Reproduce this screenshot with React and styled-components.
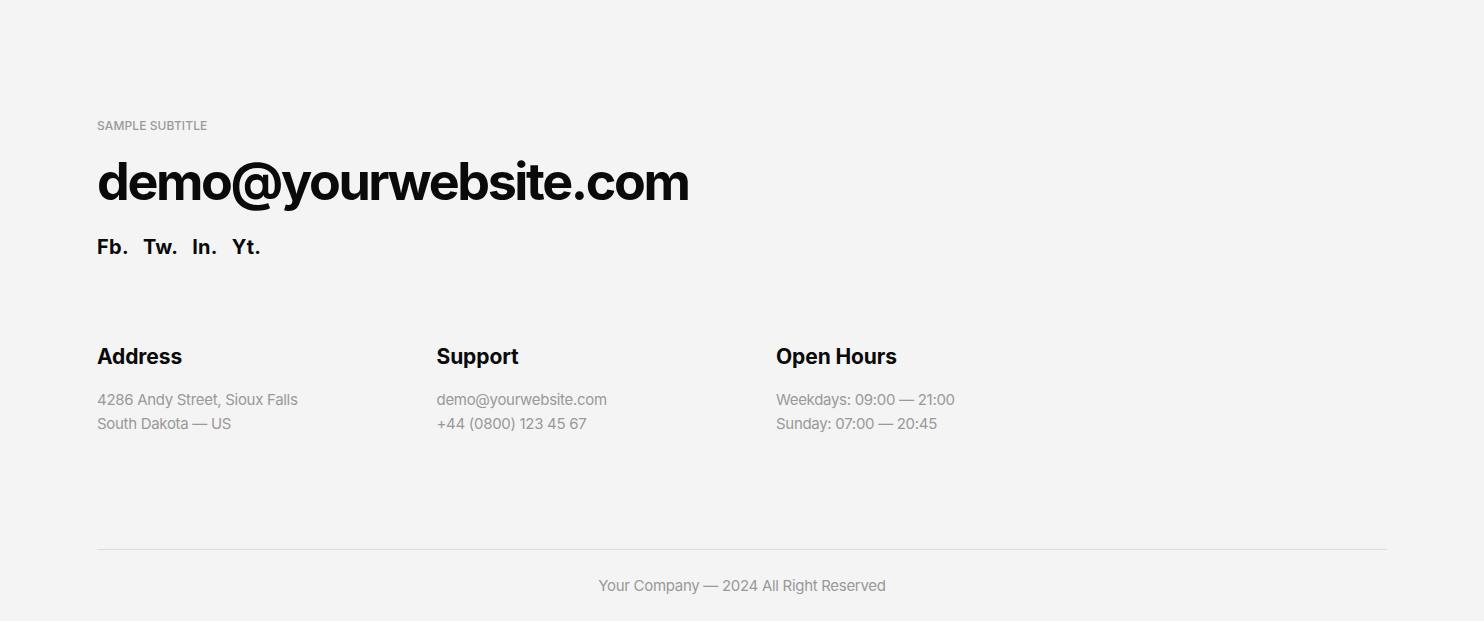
import React from 'react';
import styled, {createGlobalStyle} from 'styled-components';

const GlobalStyle = createGlobalStyle`
    html, body {
        margin: 0;
        padding: 0;
        background: #f4f4f4;
        font-family: Inter, "Noto Sans", sans-serif;
    }
`;

const Footer = styled.footer`
    background: #f4f4f4;
    min-height: 621px;
    padding: 118px 97px 0;
    box-sizing: border-box;
`;

const Subtitle = styled.div`
    font-size: 12px;
    font-weight: 500;
    color: #9a9a9a;
    text-transform: uppercase;
    letter-spacing: 0.1px;
    line-height: 16px;
`;

const Email = styled.h2`
    margin: 16px 0 0;
    font-size: 52px;
    font-weight: 700;
    letter-spacing: -2.4px;
    line-height: 64px;
    color: #0a0a0a;
`;

const Socials = styled.div`
    display: flex;
    gap: 14px;
    margin-top: 19px;
`;

const SocialLink = styled.a`
    font-size: 20px;
    font-weight: 700;
    color: #0a0a0a;
    text-decoration: none;
    line-height: 28px;
    letter-spacing: 0.3px;
`;

const Columns = styled.div`
    display: grid;
    grid-template-columns: repeat(3, 339.5px);
    margin-top: 81px;
`;

const ColTitle = styled.h4`
    margin: 0 0 16px;
    font-size: 21px;
    font-weight: 700;
    letter-spacing: -0.1px;
    line-height: 30px;
    color: #0a0a0a;
`;

const Line = styled.div`
    font-size: 15px;
    color: #999;
    line-height: 24px;
    letter-spacing: -0.3px;
`;

const Bottom = styled.div`
    margin-top: 113px;
    border-top: 1px solid #dcdcdc;
    padding-top: 24px;
    text-align: center;
    font-size: 15px;
    color: #999;
    line-height: 24px;
    letter-spacing: -0.3px;
`;

const columns = [
    {title: 'Address', lines: ['4286 Andy Street, Sioux Falls', 'South Dakota — US']},
    {title: 'Support', lines: ['demo@yourwebsite.com', '+44 (0800) 123 45 67']},
    {title: 'Open Hours', lines: ['Weekdays: 09:00 — 21:00', 'Sunday: 07:00 — 20:45']},
];

export default function App() {
    return (
        <>
            <GlobalStyle />
            <Footer>
                <Subtitle>Sample Subtitle</Subtitle>
                <Email>demo@yourwebsite.com</Email>
                <Socials>
                    {['Fb.', 'Tw.', 'In.', 'Yt.'].map(s => <SocialLink key={s} href="#">{s}</SocialLink>)}
                </Socials>
                <Columns>
                    {columns.map(col => (
                        <div key={col.title}>
                            <ColTitle>{col.title}</ColTitle>
                            {col.lines.map(l => <Line key={l}>{l}</Line>)}
                        </div>
                    ))}
                </Columns>
                <Bottom>Your Company — 2024 All Right Reserved</Bottom>
            </Footer>
        </>
    );
}
